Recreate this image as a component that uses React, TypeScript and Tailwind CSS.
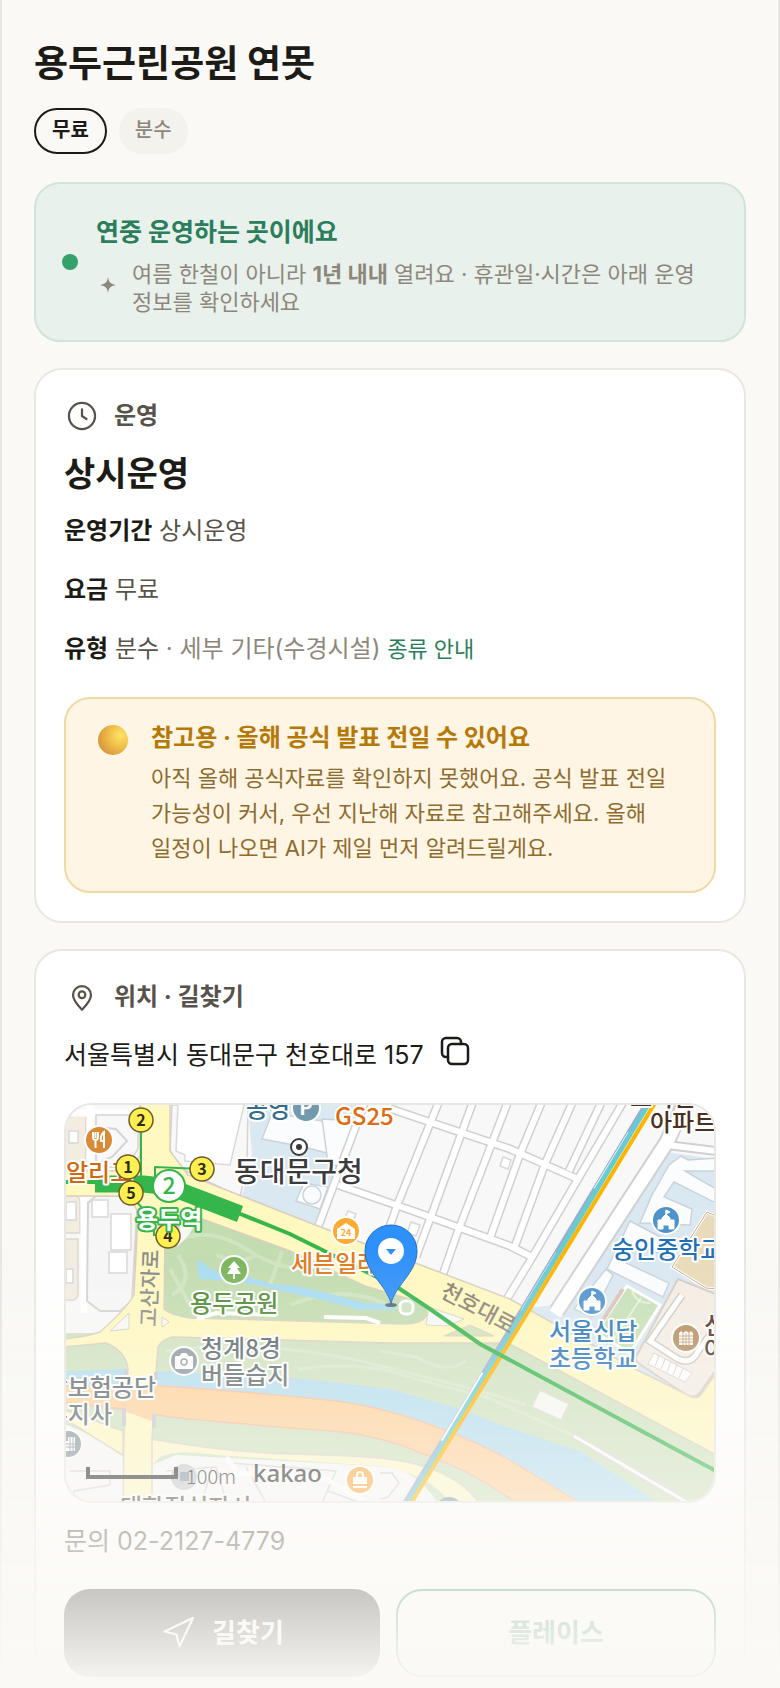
import type { ReactNode } from "react";
import { Navigation } from "lucide-react";

const details = [
  { label: "운영기간", value: "상시운영" },
  { label: "요금", value: "무료" },
];

const streets = [
  "M300 -6 L252 122",
  "M374 -6 L332 98 L318 138",
  "M408 -6 L364 114 L350 152",
  "M443 -6 L392 126 L376 172",
  "M477 -6 L454 49 L424 133",
  "M508 -6 L479 59 L449 141",
  "M537 -6 L503 66",
  "M559 -6 L512 74 L464 156 L436 202",
  "M316 0 L331 6 L444 44 L514 75",
  "M272 80 L350 107 L444 141 L468 153",
];

const exits = [
  { n: "2", x: 75, y: 15 },
  { n: "1", x: 62, y: 62 },
  { n: "3", x: 136, y: 64 },
  { n: "5", x: 65, y: 88 },
  { n: "4", x: 102, y: 131 },
];

type LabelProps = {
  x: number;
  y: number;
  color: string;
  size?: number;
  anchor?: "start" | "middle" | "end";
  children: string;
};

function MapLabel({ x, y, color, size = 24, anchor = "start", children }: LabelProps) {
  return (
    <text
      x={x}
      y={y}
      fill={color}
      fontSize={size}
      fontWeight={500}
      textAnchor={anchor}
      stroke="#fff"
      strokeWidth={4}
      strokeLinejoin="round"
      paintOrder="stroke"
    >
      {children}
    </text>
  );
}

function MapBadge({ x, y, color, children }: { x: number; y: number; color: string; children?: ReactNode }) {
  return (
    <g transform={`translate(${x} ${y})`}>
      <circle r="14" fill={color} stroke="#fff" strokeWidth="2" />
      {children}
    </g>
  );
}

function SchoolGlyph() {
  return <path d="M0 -10v5M0 -10l4 2l-4 2zM-8 9v-9h4v-2l4 -4l4 4v2h4v9h-5v-4h-6v4z" fill="#fff" stroke="#fff" strokeWidth="1" />;
}

function ParkMap() {
  return (
    <svg
      viewBox="0 0 648 396"
      preserveAspectRatio="xMidYMid slice"
      className="block h-[396px] w-full font-['Noto_Sans_CJK_KR',sans-serif]"
      role="img"
      aria-label="용두근린공원 주변 지도"
    >
      <rect width="648" height="396" fill="#f8f8f8" />

      {/* left blocks */}
      <g fill="#f3ece1" stroke="#dcd8d2" strokeWidth="1.5">
        <path d="M-4 18 Q4 10 16 8 L20 10 V56 Q20 64 10 64 H-4z" />
        <path d="M-4 91 H10 Q14 92 14 98 V128 H-4z" />
        <path d="M-4 134 H12 V190 Q10 196 4 195 H-4z" />
      </g>
      <g fill="none" stroke="#fff" strokeWidth="7">
        <path d="M24 -4 V64" />
        <path d="M18 92 V208" />
        <path d="M0 8 H74" />
      </g>
      <path d="M30 10 H72 V44 L60 62 H30z" fill="#f8f8f8" stroke="#d4d4d4" strokeWidth="1.5" />
      <path d="M32 22 L50 24 L61 36 L46 52 L36 56" fill="none" stroke="#d4d4d4" strokeWidth="2" />
      <path d="M30 91 H72 L66 196 L54 206 H34 L21 196 L22 98z" fill="#f6f6f6" stroke="#d4d4d4" strokeWidth="2" />
      <g fill="#fff" stroke="#d8d8d8" strokeWidth="1.5">
        <path d="M3 26h9v12h-9zM0 97h10v18h-10zM0 164h7v14h-7z" />
        <path d="M26 95h16v17h-16zM45 109h20v36h-20zM43 147h18v21h-18z" />
      </g>

      {/* district office block */}
      <path d="M106 0 H182 L181 60 L174 92 L112 62 L104 45z" fill="#f8f8f8" stroke="#d4d4d4" strokeWidth="1.5" />
      <path d="M112 0 L110 46 L119 50 V56 L164 60 L178 0" fill="#fff" stroke="#dadada" strokeWidth="1.5" />
      <path d="M182 -2 H296 L251 121 L176 92 L186 50z" fill="#dae8f2" />
      <g fill="#fbfcfe" stroke="#c9d3db" strokeWidth="1.5">
        <path d="M206 8 L282 20 L276 52 L238 42 L196 34z" />
        <path d="M256 14 L290 16 L274 62 L262 58z" />
        <path d="M238 78 L262 82 L254 104 L230 96z" />
        <circle cx="246" cy="90" r="9" />
      </g>

      {/* residential streets */}
      <g fill="none" stroke="#d0d0d0" strokeWidth="9">
        {streets.map((d) => (
          <path key={d} d={d} />
        ))}
      </g>
      <g fill="none" stroke="#fff" strokeWidth="6">
        {streets.map((d) => (
          <path key={d} d={d} />
        ))}
      </g>
      <g fill="#fff" stroke="#d8d8d8" strokeWidth="1.5">
        <path d="M437 52l8 3l-3 9l-8 -3zM345 117l9 3l-4 11l-9 -3zM282 106l8 3l-3 7l-8 -3z" />
      </g>

      {/* school grounds on the right */}
      <path d="M601 47 L648 54 V214 L590 290 L440 205 L490 200z" fill="#dae8f2" />
      <path d="M620 -6 L601 37 L491 206" fill="none" stroke="#d0d0d0" strokeWidth="17" />
      <path d="M601 40 L650 46" fill="none" stroke="#d0d0d0" strokeWidth="10" />
      <path d="M601 40 L650 46" fill="none" stroke="#fff" strokeWidth="6" />
      <path d="M622 -8 L601 37 L489 209" fill="none" stroke="#fff" strokeWidth="13" />
      <g fill="#fbfcfe" stroke="#c9d3db" strokeWidth="1.5">
        <path d="M615 51 L622 55 L650 53 V66 L619 66 L650 84 V98 L608 77 L598 92 L626 104 L624 120 L574 118 L586 90 L603 60z" />
        <path d="M564 116 L602 136 L598 150 L570 140 L560 158 L603 178 L597 192 L541 164z" />
        <path d="M540 164 L547 170 L526 212 L508 204z" />
      </g>
      <path d="M641 107 L652 112 V184 L640 183 L606 162z" fill="#e9dbb9" stroke="#fff" strokeWidth="3" />
      <path d="M641 107 L652 112 V184 L640 183 L606 162z" fill="none" stroke="#c9ab92" strokeWidth="1" />
      <path d="M561 181 L594 200 L564 248 L530 228z" fill="#c7e0b7" stroke="#fff" strokeWidth="3" />
      <path d="M557 184 L530 226" stroke="#d9c3b8" strokeWidth="4" />
      <path d="M575 193 L546 237 M566 186 q4 12 18 12" fill="none" stroke="#e5f2dc" strokeWidth="2" />
      <path d="M612 174 L652 190 V262 L633 289 Q629 293 622 291 L572 258 Q568 254 571 250z" fill="#f4ede4" stroke="#d4cdc5" strokeWidth="2" />
      <path d="M616 190 L584 236 L612 254 Q626 260 632 246 L650 222" fill="none" stroke="#cfc9c2" strokeWidth="8" />
      <path d="M616 190 L584 236 L612 254 Q626 260 632 246 L650 222" fill="none" stroke="#fff" strokeWidth="5" />
      <path d="M588 248 L626 268 L619 277 L582 259z" fill="#fff" stroke="#d9d3cd" strokeWidth="1" />
      <path d="M593 251l-4 10M599 254l-4 10M605 257l-4 10M611 260l-4 10M617 263l-4 10" stroke="#d9d3cd" />

      {/* riverside greens and water */}
      <path d="M0 228 L324 228 L442 234 L652 345 V400 H0z" fill="#cfe2bf" />
      <path d="M100 246 Q200 232 320 262 T460 300 M314 246 L350 252 Q380 270 400 256 M232 264 Q290 256 330 268 T420 292 L520 336" fill="none" stroke="#d8e8cb" strokeWidth="3" />
      <path d="M474 285 L503 299 L495 315 L466 302z" fill="#f8f8f5" stroke="#dcdcd6" strokeWidth="1.5" />
      <path d="M508 331 L622 398" stroke="#dcd6d6" strokeWidth="6" />
      <path d="M508 331 L622 398" stroke="#fff" strokeWidth="3" />
      <path d="M0 266 L59 264 L89 266 L160 269 L240 274 L324 284 L394 304 L430 318 L467 331 L514 346 L592 398 H505 L447 357 L324 307 L94 282 H0z" fill="#b3ddef" />
      <path
        d="M-4 281 H94 Q190 287 271 296 Q300 300 324 307 Q354 315 381 326 Q420 341 447 357 L514 398 H450 Q400 362 354 348 Q340 341 324 337 Q298 329 267 326 Q180 320 104 312 L57 304 L-4 297z"
        fill="#ffd199"
        stroke="#f3bd9d"
        strokeWidth="1.5"
      />

      {/* blocks south of the river */}
      <path d="M-4 318 Q30 330 57 352 V400 H-4z" fill="#f8f8f8" />
      <path d="M86 360 L110 350 L324 362 Q350 366 372 398 H86z" fill="#f8f8f8" />
      <path d="M86 334 Q160 347 227 349 Q290 350 324 354 Q390 362 414 398" fill="none" stroke="#dcd3c5" strokeWidth="1.5" />
      <path d="M86 335 Q160 348 227 350 Q290 351 324 355 Q388 364 412 398 H384 Q368 374 324 362 L150 350 Q110 344 94 352 L84 362z" fill="#fff8c8" />
      <g fill="none" stroke="#d4d4d4" strokeWidth="1.5">
        <path d="M100 366 L150 362 L160 396 M146 362 L136 398 M165 358 L270 366 L256 398 M180 362 L200 398 M4 366 H44 V380 L8 386 V398 M262 386 L300 400 M314 368 L326 368 L333 378 L322 392 L314 394" />
      </g>
      <path d="M160 352 L172 368 L260 374 L300 396" fill="none" stroke="#fff" strokeWidth="5" />

      {/* yellow arterial roads */}
      <g fill="#fff8c0" stroke="#d9cfbf" strokeWidth="1.5">
        <path d="M-4 66 H68 L74 50 V-4 H104 V46 L122 70 L252 121 L352 159 L444 194 L569 264 L626 292 Q632 294 636 288 L652 265 V351 L442 238 H324 L107 232 Q96 234 92 242 L89 280 L86 334 V400 H57 L58 330 L62 264 Q60 246 40 238 L-4 242 V234 Q20 232 34 227 Q60 204 68 190 L72 108 Q66 91 50 91 H-4z" />
        <path d="M-4 304 Q30 316 57 326 V350 Q40 340 -4 312z" />
      </g>
      <path d="M44 226 L63 208 V224z" fill="#f8f8f8" stroke="#d9cfbf" />
      <path d="M96 212 L103 217 L96 222z" fill="#f8f8f8" stroke="#d9cfbf" />
      <path d="M93 281 L86 316 L58 306 L62 281z" fill="#ffd199" />
      <g stroke="#c5c9d0" strokeWidth="4">
        <path d="M60 265v14M90 267v14M58 303v18M88 309v14" />
      </g>

      {/* the park */}
      <path
        d="M117 107 L224 146 L299 181 L350 196 Q364 202 360 212 Q354 219 338 219 L124 213 Q104 210 98 204 L99 130z"
        fill="#c3dcb0"
        stroke="#d9cfbf"
        strokeWidth="1.5"
      />
      <path d="M120 132 Q150 124 180 144 T240 164 M112 150 Q130 176 106 190 M216 146 L204 180 M104 164 L124 200 M224 200 Q280 176 330 204 M190 150 Q176 160 150 150" fill="none" stroke="#d0e4c1" strokeWidth="4" />
      <path d="M131 154 L150 167 L190 174 L206 179 L232 181 L262 188 L298 198 L330 199 L330 205 L292 205 L252 194 L224 188 L196 181 L168 176 L133 174z" fill="#a9dcf0" />
      <path d="M111 142 Q128 128 128 118 L114 114z" fill="#f8f8f8" stroke="#d9d9d9" />
      <path d="M131 214 L150 208 L210 210 M258 212 L300 213 L314 218" fill="none" stroke="#fff" strokeWidth="4" />
      <rect x="334" y="196" width="13" height="13" rx="5" fill="#cfe2bf" stroke="#fff" strokeWidth="3" />
      <path d="M363 202 L398 214 L382 221 L360 220z" fill="#f8f8f8" stroke="#dcd3c5" />
      <path d="M378 231 L404 220 L428 231z" fill="#d3e2bb" stroke="#d9cfbf" />

      {/* railway */}
      <path d="M579 0 L456 204 L337 400" fill="none" stroke="#9dabd3" strokeWidth="4" />
      <path d="M563 28 L529 84 M491 148 L456 206 M417 268 L376 336" fill="none" stroke="#fff" strokeWidth="3" />
      <path d="M583 -2 L460 202 L341 400" fill="none" stroke="#68cbd0" strokeWidth="5" />
      <path d="M589 -2 L465 202 L344 400" fill="none" stroke="#ffb400" strokeWidth="4" />

      {/* subway line 2 */}
      <g fill="none" stroke="#35b54a">
        <path d="M-2 77 H29 M172 108 L224 129 L331 182 L364 204 L414 239 L650 366" strokeWidth="4" />
        <path d="M29 79 H78 L104 82 L174 109" strokeWidth="17" />
        <path d="M75 22 V74 M136 64 L89 62 V90 M68 94 L88 116 V130 H100" strokeWidth="2" />
      </g>

      <text fill="#8a8a8a" fontSize="21" fontWeight="500" transform="translate(90 222) rotate(-88)">
        고산자로
      </text>
      <text fill="#8a8272" fontSize="22" fontWeight="500" transform="translate(373 191) rotate(28)">
        천호대로
      </text>

      <MapLabel x={0} y={76} color="#cc6a10">알리고</MapLabel>
      <MapLabel x={180} y={12} color="#336b8a">공영</MapLabel>
      <MapLabel x={269} y={20} color="#dd6b10">GS25</MapLabel>
      <MapLabel x={168} y={77} color="#3b3b3e" size={28}>동대문구청</MapLabel>
      <MapLabel x={225} y={167} color="#e07a1c">세븐일레븐</MapLabel>
      <MapLabel x={124} y={207} color="#4f8a35">용두공원</MapLabel>
      <MapLabel x={135} y={252} color="#59656b">청계8경</MapLabel>
      <MapLabel x={135} y={279} color="#59656b">버들습지</MapLabel>
      <MapLabel x={90} y={291} color="#59656b" anchor="end">강보험공단</MapLabel>
      <MapLabel x={46} y={318} color="#59656b" anchor="end">부지사</MapLabel>
      <MapLabel x={54} y={411} color="#444">대한적십자사</MapLabel>
      <MapLabel x={564} y={1} color="#4a3020">브라운동</MapLabel>
      <MapLabel x={584} y={26} color="#4a3020">아파트</MapLabel>
      <MapLabel x={546} y={153} color="#1f70b8">숭인중학교</MapLabel>
      <MapLabel x={483} y={235} color="#2674b8">서울신답</MapLabel>
      <MapLabel x={483} y={262} color="#2674b8">초등학교</MapLabel>
      <MapLabel x={638} y={229} color="#4a3020">신</MapLabel>
      <MapLabel x={638} y={253} color="#4a3020">아</MapLabel>

      <circle cx="233" cy="42" r="8" fill="#fff" stroke="#3b3b3e" strokeWidth="2" />
      <circle cx="233" cy="42" r="3" fill="#3b3b3e" />

      <MapBadge x={33} y={35} color="#d88a34">
        <path d="M-6 -8v5q0 3 2.500 3v8M-1 -8v5q0 3 -2.500 3M-3.500 -8v6M5 8v-16q-4 3 -3 9h3" fill="none" stroke="#fff" strokeWidth="2" />
      </MapBadge>
      <MapBadge x={240} y={3} color="#7399ad">
        <text y="7" textAnchor="middle" fontSize="20" fontWeight="700" fill="#fff">P</text>
      </MapBadge>
      <MapBadge x={280} y={126} color="#ffaa33">
        <path d="M-9 -2L0 -8l9 6v10h-18z" fill="#fff" />
        <text y="5" textAnchor="middle" fontSize="9" fontWeight="700" fill="#ffaa33">24</text>
      </MapBadge>
      <MapBadge x={168} y={165} color="#7ab55a">
        <path d="M0 -9l6 7h-3l4 6h-6v5h-2v-5h-6l4 -6h-3z" fill="#fff" />
      </MapBadge>
      <MapBadge x={118} y={256} color="#8b989f">
        <path d="M-8 -4h4l2 -3h4l2 3h4v11h-16z" fill="#fff" stroke="#fff" strokeLinejoin="round" strokeWidth="2" />
        <circle r="3" cy="1" fill="#fff" stroke="#8b989f" strokeWidth="1.5" />
      </MapBadge>
      <MapBadge x={2} y={339} color="#84949b">
        <path d="M-6 -3h6v-4h7v14h-13z" fill="#fff" />
        <path d="M-6 0h13M-6 3h13M2 -7v14M5 -7v14" stroke="#84949b" />
      </MapBadge>
      <MapBadge x={600} y={115} color="#4f93cd">
        <SchoolGlyph />
      </MapBadge>
      <MapBadge x={526} y={196} color="#4f93cd">
        <SchoolGlyph />
      </MapBadge>
      <MapBadge x={620} y={233} color="#b58d5e">
        <path d="M-7 7v-12l2 -2l2 2l3 -2l3 2l2 -2l2 2v12z" fill="#fff" />
        <path d="M-7 -2h14M-7 1h14M-7 4h14M-3 -5v12M0 -5v12M3 -5v12" stroke="#b58d5e" strokeWidth="0.8" />
      </MapBadge>
      <MapBadge x={294} y={375} color="#ffa63d">
        <path d="M-7 -3h14v7h-14zM-7 6h14v2h-14z" fill="#fff" />
        <path d="M-3 -3v-2q0 -3 3 -3t3 3v2" fill="none" stroke="#fff" strokeWidth="2" />
      </MapBadge>
      <circle cx="118" cy="372" r="13" fill="#c4c8cb" />
      <rect x="114" y="367" width="9" height="9" fill="#8393a0" />
      <circle cx="383" cy="406" r="14" fill="#7f9aa8" />

      {exits.map((exit) => (
        <g key={exit.n}>
          <circle cx={exit.x} cy={exit.y} r="12" fill="#fff04f" stroke="#6d5a2c" strokeWidth="1.5" />
          <text x={exit.x} y={exit.y + 6} textAnchor="middle" fontSize="16" fontWeight="700" fill="#2b2b22">
            {exit.n}
          </text>
        </g>
      ))}
      <circle cx="103" cy="81" r="16" fill="#fff" stroke="#35b54a" strokeWidth="2" />
      <text x="103" y="89" textAnchor="middle" fontSize="23" fontWeight="500" fill="#35b54a">2</text>
      <text x="70" y="123" fontSize="24" fontWeight="700" fill="#fff" stroke="#35b54a" strokeWidth="4" strokeLinejoin="round" paintOrder="stroke">
        용두역
      </text>

      {/* marker */}
      <ellipse cx="325" cy="200" rx="6" ry="2" fill="#5d6a72" />
      <path d="M325 199 C321 180 299 168 299 146 A26 26 0 0 1 351 146 C351 168 329 180 325 199z" fill="#2e90fa" stroke="#1c6fce" strokeWidth="1" />
      <circle cx="325" cy="146" r="13" fill="#fff" />
      <path d="M320 144h10l-5 6z" fill="#2e90fa" />

      {/* scale */}
      <path d="M22 362 V372 H110 V362" fill="none" stroke="#222" strokeWidth="4" />
      <text x="120" y="379" fontSize="20" fontWeight="300" fill="#222">100m</text>
      <text x="187" y="377" fontSize="24" fontWeight="500" fill="#222" className="font-['Noto_Sans',sans-serif]">kakao</text>
    </svg>
  );
}

function ClockIcon() {
  return (
    <svg viewBox="0 0 24 24" className="size-9 shrink-0" fill="none" stroke="currentColor" strokeWidth="1.500" strokeLinecap="round" strokeLinejoin="round">
      <circle cx="12" cy="12" r="8.700" />
      <path d="M12 7.500V12l3 2" />
    </svg>
  );
}

function PinIcon() {
  return (
    <svg viewBox="0 0 24 24" className="size-9 shrink-0" fill="none" stroke="currentColor" strokeWidth="1.500" strokeLinejoin="round">
      <path d="M12 20.500c-3.500 -3.600 -6 -6.700 -6 -9.800a6 6 0 0 1 12 0c0 3.100 -2.500 6.200 -6 9.800z" />
      <circle cx="12" cy="10.500" r="2.200" />
    </svg>
  );
}

function CopyIcon() {
  return (
    <svg viewBox="0 0 30 30" className="size-[30px]" fill="none" stroke="currentColor" strokeWidth="2.500" strokeLinecap="round" strokeLinejoin="round">
      <rect x="8" y="8" width="20" height="20" rx="4" />
      <path d="M8 21H6a4 4 0 0 1 -4 -4V6a4 4 0 0 1 4 -4h11a4 4 0 0 1 4 4v2" />
    </svg>
  );
}

function SectionHeader({ icon, children }: { icon: ReactNode; children: ReactNode }) {
  return (
    <h2 className="flex h-8 items-center gap-3.5 text-[24px] leading-8 font-bold text-[#57534a]">
      {icon}
      {children}
    </h2>
  );
}

export default function App() {
  return (
    <div className="relative h-screen overflow-hidden border-x-2 border-[#e9e7e1] bg-[#faf9f6] px-8 pt-[42px] font-[Inter,'Noto_Sans_CJK_KR',sans-serif] break-keep text-[#1c1b17]">
      <h1 className="text-[37px] leading-[44px] font-bold">용두근린공원 연못</h1>

      <div className="mt-[22px] flex gap-3 text-[20px] leading-6">
        <span className="rounded-full border-2 border-[#1c1b17] px-4 pt-2 pb-2.5 font-bold">무료</span>
        <span className="rounded-full bg-[#f3f2ed] px-4 pt-2.5 pb-3 font-medium text-[#8d877b]">분수</span>
      </div>

      {/* Status */}
      <section className="mt-7 flex items-center gap-[18px] rounded-[26px] border-2 border-[#cfe5d9] bg-[#e8f1eb] py-6 pr-7 pl-[26px]">
        <span className="size-4 shrink-0 rounded-full bg-[#36a16b]" />
        <div>
          <strong className="block text-[25px] leading-[48px] font-bold text-[#2b7d5b]">연중 운영하는 곳이에요</strong>
          <div className="mt-1 flex items-center gap-4 text-[#8d877b]">
            <svg viewBox="0 0 16 16" className="mb-1.5 ml-1 size-4 shrink-0" fill="currentColor">
              <path d="M8 0c.8 5 2.200 7 8 8c-5.800 1 -7.200 3 -8 8c-.8 -5 -2.200 -7 -8 -8c5.800 -1 7.200 -3 8 -8z" />
            </svg>
            <p className="text-[22px] leading-7">
              여름 한철이 아니라 <b>1년 내내</b> 열려요 · 휴관일·시간은 아래 운영 정보를 확인하세요
            </p>
          </div>
        </div>
      </section>

      {/* Opening hours */}
      <section className="mt-[26px] rounded-[28px] border-2 border-[#e9e7e1] bg-white px-7 pt-[30px] pb-7">
        <SectionHeader icon={<ClockIcon />}>운영</SectionHeader>
        <p className="mt-5 text-[34px] leading-[44px] font-bold">상시운영</p>
        <div className="mt-[17px] flex flex-col gap-[23px] text-[24px] leading-9 text-[#57534a]">
          {details.map((item) => (
            <p key={item.label}>
              <b className="text-[#1c1b17]">{item.label}</b> {item.value}
            </p>
          ))}
          <p>
            <b className="text-[#1c1b17]">유형</b> 분수 <span className="text-[#8d877b]">· 세부 기타(수경시설)</span>{" "}
            <a href="#types" className="text-[22px] text-[#2b7d5b]">
              종류 안내
            </a>
          </p>
        </div>

        <div className="mt-[30px] flex gap-[23px] rounded-[26px] border-2 border-[#f0daa4] bg-[#fff5e4] pt-[22px] pr-7 pb-[25px] pl-8">
          <span className="mt-1 size-[30px] shrink-0 rounded-full bg-[radial-gradient(circle_at_75%_35%,#ffe566_0%,#f0bd48_40%,#d99a3e_75%,#cf7a5a_100%)]" />
          <div>
            <strong className="block text-[24px] leading-[34px] font-bold text-[#b57908]">
              참고용 · 올해 공식 발표 전일 수 있어요
            </strong>
            <p className="mt-1.5 text-[22px] leading-[35px] text-[#8e6b2e]">
              아직 올해 공식자료를 확인하지 못했어요. 공식 발표 전일 가능성이 커서, 우선 지난해 자료로 참고해주세요. 올해
              일정이 나오면 AI가 제일 먼저 알려드릴게요.
            </p>
          </div>
        </div>
      </section>

      {/* Location */}
      <section className="mt-[26px] rounded-[28px] border-2 border-[#e9e7e1] bg-white px-7 pt-[30px] pb-7">
        <SectionHeader icon={<PinIcon />}>위치 · 길찾기</SectionHeader>
        <div className="mt-6 flex h-9 items-center gap-4 text-[25px] leading-9">
          <span>서울특별시 동대문구 천호대로 157</span>
          <button type="button" aria-label="주소 복사" className="pb-2">
            <CopyIcon />
          </button>
        </div>
        <div className="mt-[30px] overflow-hidden rounded-[28px] border-2 border-[#e9e7e1]">
          <ParkMap />
        </div>
        <p className="mt-5 text-[25px] leading-9 text-[#57534a]">
          문의 <a href="tel:02-2127-4779">02-2127-4779</a>
        </p>
        <div className="mt-[30px] flex gap-4 text-[26px] leading-9 font-bold">
          <button type="button" className="flex h-[88px] flex-1 items-center justify-center gap-4 rounded-[26px] bg-[#1c1b17] text-white">
            <Navigation className="size-9" strokeWidth={1.5} />
            길찾기
          </button>
          <button type="button" className="h-[88px] flex-1 rounded-[26px] border-2 border-[#2b7d5b] bg-white text-[#2b7d5b]">
            플레이스
          </button>
        </div>
      </section>

      <div className="pointer-events-none fixed inset-x-0 bottom-0 h-[440px] bg-linear-to-b from-[#faf9f5]/0 to-[#faf9f5]" />
    </div>
  );
}
